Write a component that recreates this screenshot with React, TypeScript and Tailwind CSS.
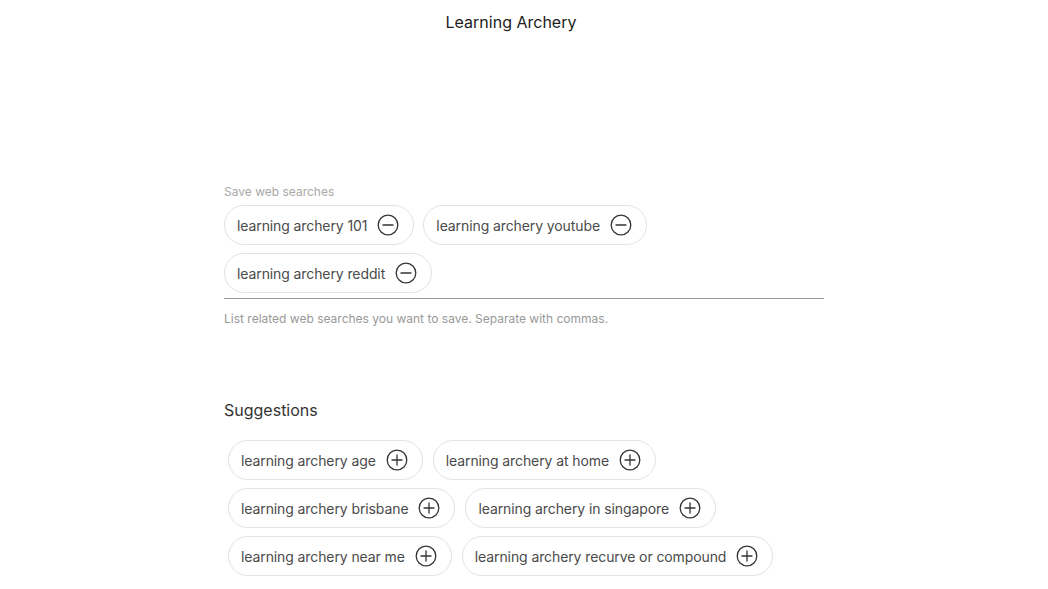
import React from 'react';

const SAVED = ['learning archery 101', 'learning archery youtube', 'learning archery reddit'];

const SUGGESTIONS = [
  'learning archery age',
  'learning archery at home',
  'learning archery brisbane',
  'learning archery in singapore',
  'learning archery near me',
  'learning archery recurve or compound',
];

function CircleIcon({ plus }: { plus?: boolean }) {
  return (
    <svg width="22" height="22" viewBox="0 0 22 22" fill="none" stroke="#333" strokeWidth="1.3" strokeLinecap="round">
      <circle cx="11" cy="11" r="9.8" />
      <path d="M6 11h10" />
      {plus && <path d="M11 6v10" />}
    </svg>
  );
}

function Chip({ label, plus }: { label: string; plus?: boolean }) {
  return (
    <button
      type="button"
      className="flex h-10 items-center gap-[10px] rounded-full border border-[#e2e2e2] bg-white pl-[12px] pr-[14px] text-[14px] tracking-[-0.1px] text-[#4a4a4a]"
    >
      <span>{label}</span>
      <CircleIcon plus={plus} />
    </button>
  );
}

export default function App() {
  return (
    <div className="min-h-[589px] bg-white font-['Inter',sans-serif]">
      <h1 className="w-[1022px] pt-[12px] text-center text-[16px] leading-[20px] text-[#222]">Learning Archery</h1>

      <div className="ml-[224px] w-[600px] pt-[152px]">
        <label className="block text-[12px] leading-[16px] text-[#a8a8a8]">Save web searches</label>
        <div className="mt-[5px] flex flex-wrap gap-x-[9px] gap-y-[8px] border-b border-[#999] pb-[5px]">
          {SAVED.map((s) => (
            <Chip key={s} label={s} />
          ))}
        </div>
        <p className="mt-[12px] text-[12px] leading-[16px] text-[#999]">
          List related web searches you want to save. Separate with commas.
        </p>

        <h2 className="mt-[71px] text-[16px] leading-[24px] text-[#333]">Suggestions</h2>
        <div className="mt-[18px] ml-[4px] flex flex-wrap gap-x-[10px] gap-y-[8px]">
          {SUGGESTIONS.map((s) => (
            <Chip key={s} label={s} plus />
          ))}
        </div>
      </div>
    </div>
  );
}
